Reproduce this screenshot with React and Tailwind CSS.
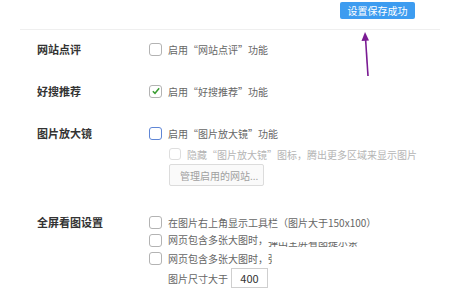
import React from "react";

const font = { fontFamily: '"Noto Sans CJK SC", "Noto Sans", sans-serif' };

function Box({ state = "off" }) {
  const cls =
    state === "focus"
      ? "border-[#5f86d6] w-[13px] h-[13px]"
      : state === "disabled"
      ? "border-[#dedede] w-[12px] h-[12px]"
      : "border-[#b3b3b3] w-[13px] h-[13px]";
  return (
    <span
      className={`relative inline-flex shrink-0 items-center justify-center rounded-[3px] border bg-white ${cls}`}
    >
      {state === "on" && (
        <svg viewBox="0 0 12 12" className="h-[10px] w-[10px]">
          <path d="M2.2 6.2 L4.8 8.8 L9.8 2.8" fill="none" stroke="#3a9d32" strokeWidth="1.8" />
        </svg>
      )}
    </span>
  );
}

function Line({ box, children, muted = false, indent = false }) {
  return (
    <div className={`flex h-[18px] items-center ${indent ? "pl-[20px]" : ""}`}>
      <Box state={box} />
      <span className={`ml-[6px] whitespace-nowrap text-[10px] ${muted ? "text-[#b5b5b5]" : "text-[#666]"}`}>
        {children}
      </span>
    </div>
  );
}

function Row({ label, children, className = "" }) {
  return (
    <div className={`flex ${className}`}>
      <div className="flex h-[18px] w-[112px] shrink-0 items-center text-[11px] font-bold text-[#333]">
        {label}
      </div>
      <div className="flex flex-col">{children}</div>
    </div>
  );
}

export default function App() {
  return (
    <div className="relative h-[295px] w-[475px] overflow-hidden bg-white" style={font}>
      <div className="ml-[20px] w-[420px]">
        <div className="flex h-[29px] justify-end pr-[25px] pt-[2px]">
          <button className="h-[17px] w-[75px] whitespace-nowrap rounded-[2px] bg-[#3d9cf0] text-[10px] leading-[17px] text-white">
            设置保存成功
          </button>
        </div>
        <div className="h-px bg-[#efefef]" />
        <div className="pl-[17px] pt-[10px]">
          <Row label="网站点评">
            <Line box="off">启用“网站点评”功能</Line>
          </Row>
          <Row label="好搜推荐" className="mt-[24px]">
            <Line box="on">启用“好搜推荐”功能</Line>
          </Row>
          <Row label="图片放大镜" className="mt-[24px]">
            <Line box="focus">启用“图片放大镜”功能</Line>
            <div className="mt-[3px]">
              <Line box="disabled" muted indent>
                隐藏“图片放大镜”图标，腾出更多区域来显示图片
              </Line>
            </div>
            <button className="ml-[20px] mt-[1px] h-[22px] w-[95px] whitespace-nowrap rounded-[2px] border border-[#dcdcdc] bg-[#fafafa] pl-[10px] text-left text-[10px] text-[#a0a0a0]">
              管理启用的网站...
            </button>
          </Row>
          <Row label="全屏看图设置" className="mt-[27px]">
            <Line box="off">在图片右上角显示工具栏（图片大于150x100）</Line>
            <Line box="off">
              网页包含多张大图时，
              <span className="relative inline-block h-[13px] w-[92px] align-middle">
                <span className="absolute bottom-0 left-0 h-[6px] w-full overflow-hidden">
                  <span className="absolute bottom-0 left-0 whitespace-nowrap leading-[13px]">弹出全屏看图提示条</span>
                </span>
              </span>
            </Line>
            <Line box="off">
              网页包含多张大图时，
              <span className="inline-block w-[4px] overflow-hidden align-bottom">弹</span>
            </Line>
            <div className="mt-[1px] flex h-[20px] items-center pl-[19px] text-[10px] text-[#666]">
              <span>图片尺寸大于</span>
              <span className="ml-[3px] flex h-[20px] w-[37px] items-center justify-center border border-[#cfcfcf] text-[11px] text-[#333]">
                400
              </span>
            </div>
          </Row>
        </div>
      </div>
      <svg className="absolute left-[358px] top-[30px]" width="16" height="50" viewBox="0 0 16 50">
        <path d="M7.5 8 L10 46" stroke="#7a1b93" strokeWidth="1.6" fill="none" />
        <path d="M7 2 L3.5 11 L11 10.5 Z" fill="#7a1b93" />
      </svg>
    </div>
  );
}
